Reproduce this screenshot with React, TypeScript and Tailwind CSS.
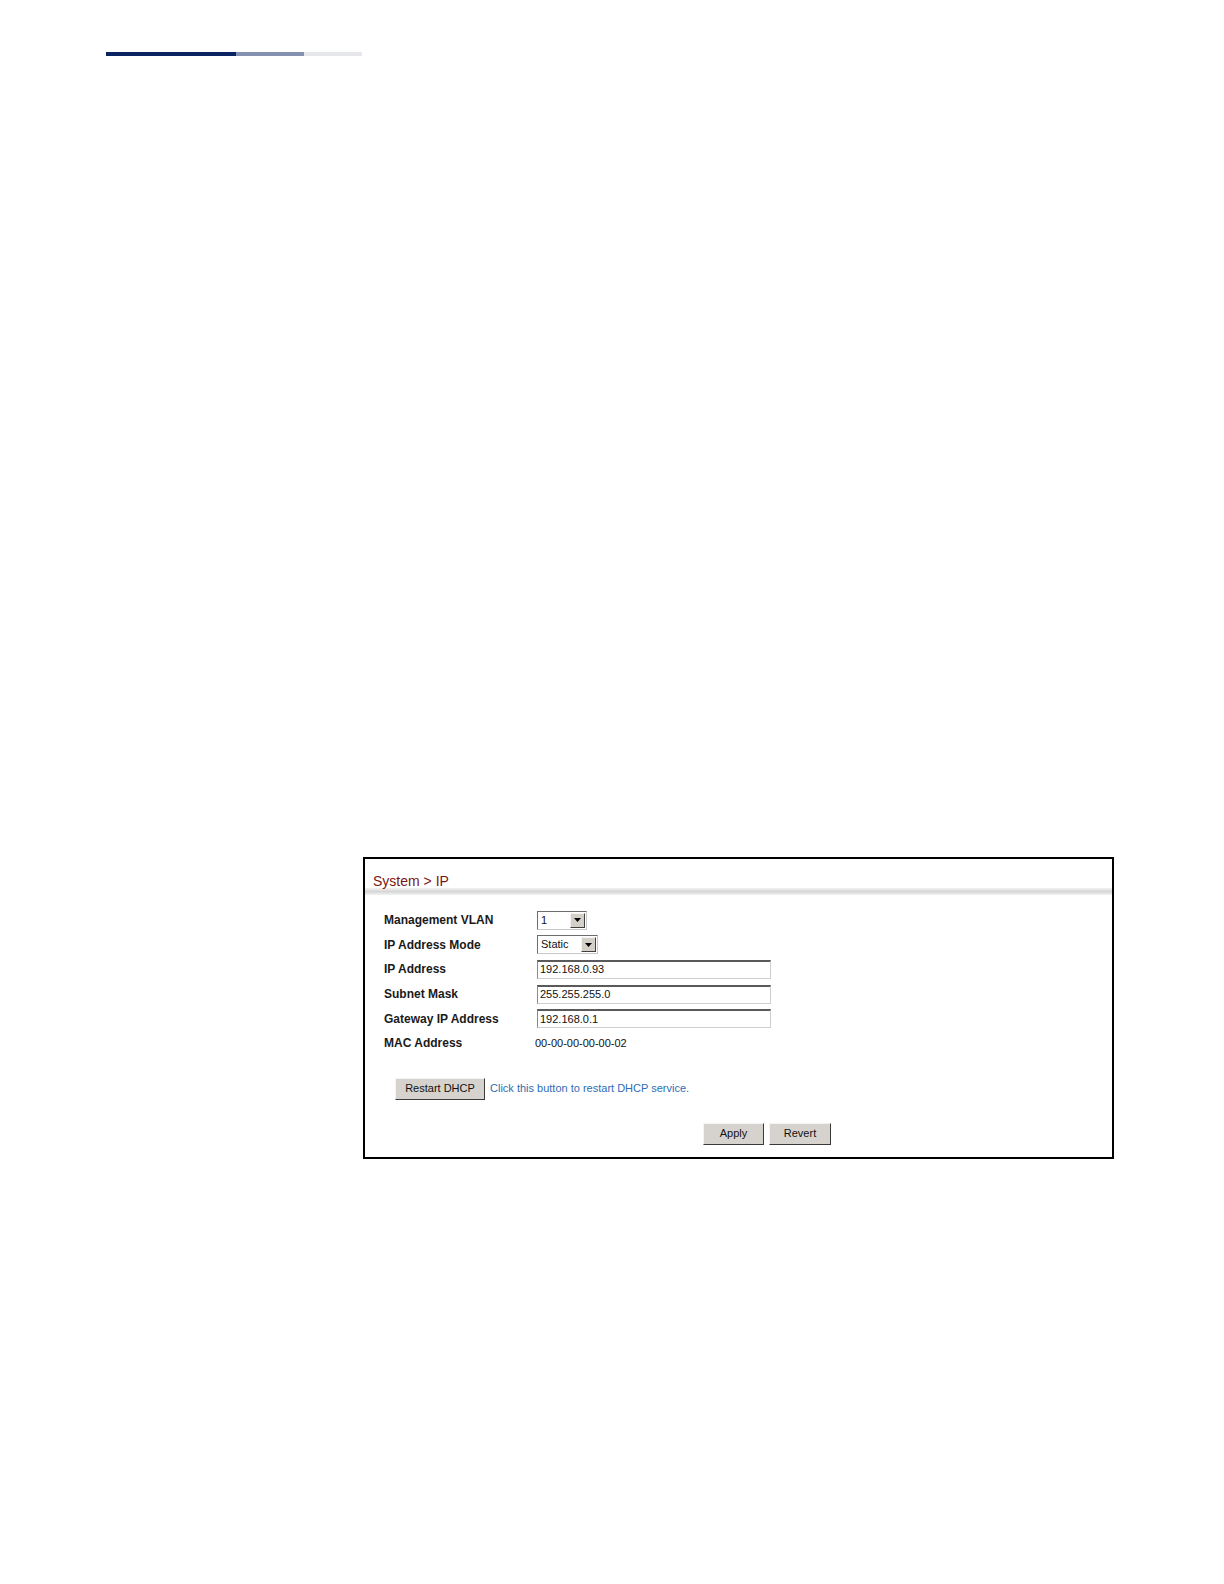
import React from 'react';

// System > IP settings page (web management screenshot)

const font = { fontFamily: '"Liberation Sans", Arial, sans-serif' };

const Label: React.FC<{ children: React.ReactNode }> = ({ children }) => (
  <div className="w-[153px] shrink-0 text-[12px] font-bold text-[#1a1a1a] leading-none">{children}</div>
);

const Select: React.FC<{ value: string; width: string }> = ({ value, width }) => (
  <div
    className={`${width} h-[19px] flex items-center justify-between bg-white border border-t-[#6d6d6d] border-l-[#6d6d6d] border-r-[#c8c8c8] border-b-[#c8c8c8] pl-[3px] pr-[1px]`}
  >
    <span className="text-[11px] text-[#111] leading-none">{value}</span>
    <span className="w-[15px] h-[15px] bg-[#d4d0c8] border border-t-[#f4f4f4] border-l-[#f4f4f4] border-r-[#404040] border-b-[#404040] flex items-center justify-center">
      <svg width="7" height="4" viewBox="0 0 7 4">
        <path d="M0 0 H7 L3.5 4 Z" fill="#000" />
      </svg>
    </span>
  </div>
);

const TextInput: React.FC<{ value: string }> = ({ value }) => (
  <div className="w-[234px] h-[19px] flex items-center bg-white border border-t-2 border-t-[#5a5a5a] border-l-[#8a8a8a] border-r-[#cfcfcf] border-b-[#cfcfcf] pl-[2px]">
    <span className="text-[11px] text-[#111] leading-none">{value}</span>
  </div>
);

const Btn: React.FC<{ children: React.ReactNode; width: string }> = ({ children, width }) => (
  <button
    className={`${width} h-[22px] bg-[#d6d3ce] border border-t-[#f4f4f4] border-l-[#f4f4f4] border-r-[#3a3a3a] border-b-[#3a3a3a] text-[11px] text-[#111] leading-none flex items-center justify-center`}
  >
    {children}
  </button>
);

const Row: React.FC<{ children: React.ReactNode }> = ({ children }) => (
  <div className="h-[24.6px] flex items-center">{children}</div>
);

export default function App() {
  return (
    <div className="w-[1224px] min-h-[1584px] bg-white" style={font}>
      {/* top rule */}
      <div className="flex pt-[52px] pl-[106px]">
        <div className="w-[130px] h-[4px] bg-[#0a2461]" />
        <div className="w-[68px] h-[4px] bg-[#8390b0]" />
        <div className="w-[58px] h-[4px] bg-[#e6e7ea]" />
      </div>

      {/* screenshot frame */}
      <div className="mt-[801px] ml-[363px] w-[751px] border-2 border-black">
        <div className="h-[29px] pt-[10px] pl-[8px]">
          <span className="text-[14px] leading-[16px] text-[#7a1616]">System &gt; IP</span>
        </div>
        <div className="h-[7px] bg-gradient-to-b from-[#f3f3f3] via-[#d6d6d6] to-[#f3f3f3]" />

        <div className="pt-[13px] pl-[19px]">
          <Row>
            <Label>Management VLAN</Label>
            <Select value="1" width="w-[50px]" />
          </Row>
          <Row>
            <Label>IP Address Mode</Label>
            <Select value="Static" width="w-[61px]" />
          </Row>
          <Row>
            <Label>IP Address</Label>
            <TextInput value="192.168.0.93" />
          </Row>
          <Row>
            <Label>Subnet Mask</Label>
            <TextInput value="255.255.255.0" />
          </Row>
          <Row>
            <Label>Gateway IP Address</Label>
            <TextInput value="192.168.0.1" />
          </Row>
          <Row>
            <Label>MAC Address</Label>
            <span className="-ml-[2px] text-[11px] text-[#111] leading-none">00-00-00-00-00-02</span>
          </Row>
        </div>

        <div className="mt-[22px] pl-[30px] flex items-center gap-[5px]">
          <Btn width="w-[90px]">Restart DHCP</Btn>
          <span className="text-[11px] text-[#2f6db5] leading-none">Click this button to restart DHCP service.</span>
        </div>

        <div className="mt-[23px] mb-[12px] pl-[338px] flex gap-[5px]">
          <Btn width="w-[61px]">Apply</Btn>
          <Btn width="w-[62px]">Revert</Btn>
        </div>
      </div>
    </div>
  );
}
